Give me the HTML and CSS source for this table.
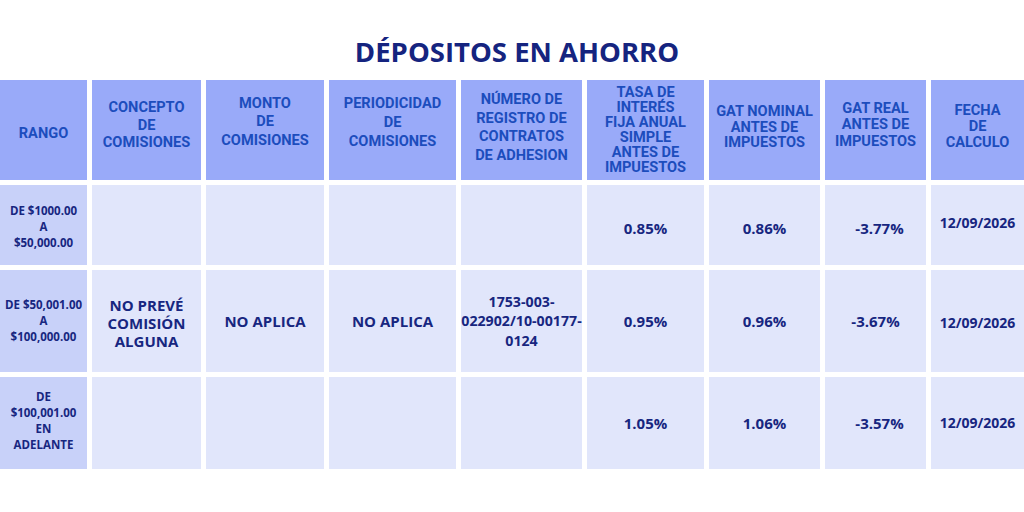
FILE: index.html
```html
<!DOCTYPE html>
<html lang="es">
<head>
<meta charset="utf-8">
<title>Dépositos en ahorro</title>
<link rel="stylesheet" href="styles.css">
</head>
<body>
<h1 class="title">DÉPOSITOS EN AHORRO</h1>
<div class="table">
  <div class="cell head h-rango">RANGO</div>
  <div class="cell head h-concepto">CONCEPTO<br>DE<br>COMISIONES</div>
  <div class="cell head h-monto">MONTO<br>DE<br>COMISIONES</div>
  <div class="cell head h-period">PERIODICIDAD<br>DE<br>COMISIONES</div>
  <div class="cell head h-numero">NÚMERO DE<br>REGISTRO DE<br>CONTRATOS<br>DE ADHESION</div>
  <div class="cell head h-tasa">TASA DE<br>INTERÉS<br>FIJA ANUAL<br>SIMPLE<br>ANTES DE<br>IMPUESTOS</div>
  <div class="cell head h-nominal">GAT NOMINAL<br>ANTES DE<br>IMPUESTOS</div>
  <div class="cell head h-real">GAT REAL<br>ANTES DE<br>IMPUESTOS</div>
  <div class="cell head h-fecha">FECHA<br>DE<br>CALCULO</div>

  <div class="cell range r1">DE $1000.00<br>A<br>$50,000.00</div>
  <div class="cell"></div>
  <div class="cell"></div>
  <div class="cell"></div>
  <div class="cell"></div>
  <div class="cell value v-down">0.85%</div>
  <div class="cell value v-down">0.86%</div>
  <div class="cell value v-down shift">-3.77%</div>
  <div class="cell date d-up">12/09/2026</div>

  <div class="cell range">DE $50,001.00<br>A<br>$100,000.00</div>
  <div class="cell big v-prev">NO PREVÉ<br>COMISIÓN<br>ALGUNA</div>
  <div class="cell big">NO APLICA</div>
  <div class="cell big">NO APLICA</div>
  <div class="cell registro">1753-003-<br>022902/10-00177-<br>0124</div>
  <div class="cell value">0.95%</div>
  <div class="cell value">0.96%</div>
  <div class="cell value">-3.67%</div>
  <div class="cell date d-down">12/09/2026</div>

  <div class="cell range r3">DE<br>$100,001.00<br>EN<br>ADELANTE</div>
  <div class="cell"></div>
  <div class="cell"></div>
  <div class="cell"></div>
  <div class="cell"></div>
  <div class="cell value">1.05%</div>
  <div class="cell value">1.06%</div>
  <div class="cell value shift">-3.57%</div>
  <div class="cell date">12/09/2026</div>
</div>
</body>
</html>
```

FILE: styles.css
```css
* { box-sizing: border-box; }

html, body {
  margin: 0;
  padding: 0;
  background: #ffffff;
}

body {
  width: 1024px;
  height: 512px;
  overflow: hidden;
  font-family: "Open Sans", "DejaVu Sans", sans-serif;
}

.title {
  margin: 0;
  padding: 35px 0 0 10px;
  height: 80px;
  line-height: 34px;
  font-size: 27.5px;
  font-weight: 700;
  text-align: center;
  color: #15247f;
}

.table {
  display: grid;
  grid-template-columns: 87px 109px 118px 127px 121px 117px 111px 101px 1fr;
  grid-template-rows: 100px 80px 102px 92px;
  gap: 5px;
}

.cell {
  display: flex;
  align-items: center;
  justify-content: center;
  text-align: center;
  background: #e1e6fb;
  color: #172680;
  font-family: "Open Sans", "DejaVu Sans", sans-serif;
  font-weight: 700;
}

.head {
  background: #99aaf9;
  color: #1c4dbd;
  font-family: Roboto, "Liberation Sans", sans-serif;
  font-size: 14.6px;
  line-height: 16px;
}

.h-rango { padding-top: 6px; }
.h-concepto { line-height: 17.5px; padding-bottom: 9px; }
.h-monto { line-height: 18.5px; padding-bottom: 17px; }
.h-period { line-height: 19px; padding-bottom: 15px; }
.h-numero { line-height: 18.5px; padding-bottom: 6px; }
.h-tasa { line-height: 15px; }
.h-nominal { line-height: 15.5px; padding-bottom: 5px; }
.h-real { line-height: 16.5px; padding-bottom: 11px; }
.h-fecha { line-height: 16px; padding-bottom: 8px; }

.range {
  background: #c8d1f9;
  font-size: 11.5px;
  line-height: 16px;
}
.r1 { padding-top: 4px; }
.r3 { padding-bottom: 4px; }

.big {
  font-size: 15px;
  line-height: 18px;
}
.v-prev { padding-top: 4px; }

.registro {
  font-size: 14.2px;
  line-height: 19.5px;
  white-space: nowrap;
}

.value {
  font-size: 15px;
  line-height: 20px;
}
.v-down { padding-top: 6px; }
.shift { padding-left: 8px; }

.date {
  font-size: 14px;
  line-height: 20px;
}
.d-up { padding-bottom: 4px; }
.d-down { padding-top: 4px; }
```
